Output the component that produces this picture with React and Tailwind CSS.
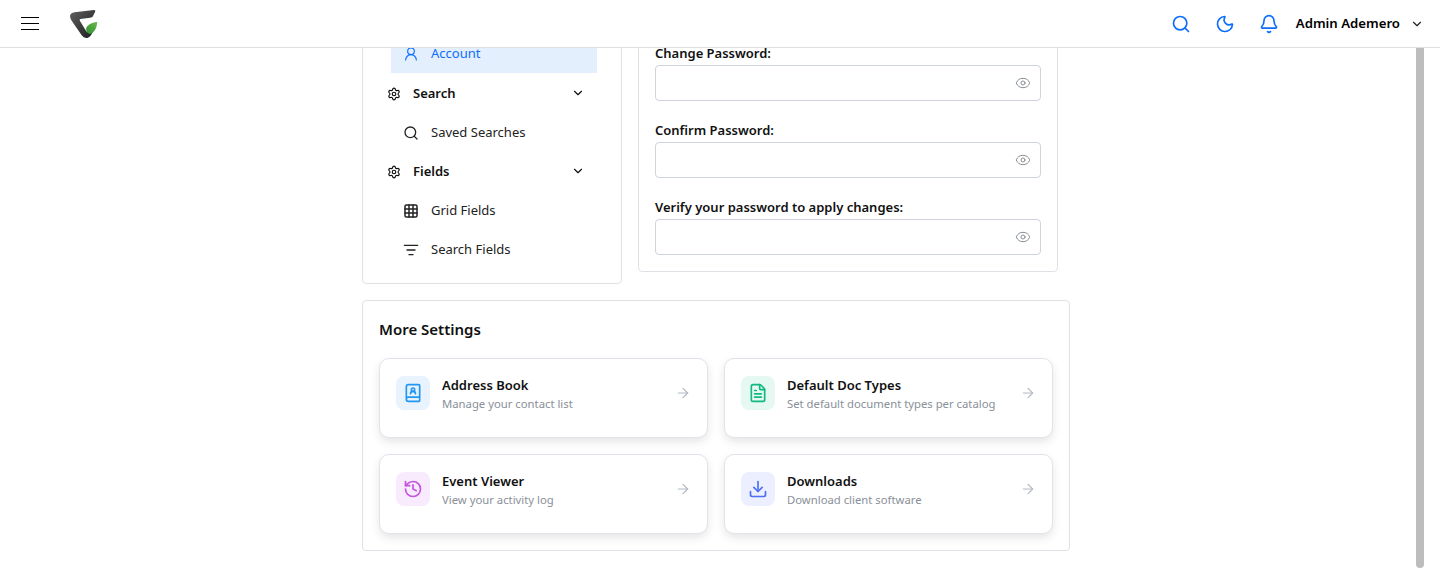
import React from 'react';
import {
  Search, Moon, Bell, ChevronDown, UserRound, Settings, Grid3x3, ListFilter, Eye,
  BookUser, FileText, History, Download, ArrowRight,
} from 'lucide-react';

const Logo = () => (
  <svg width="28" height="30" viewBox="0 0 28 30" className="block blur-[0.4px]">
    <defs>
      <linearGradient id="logoDark" x1="0" y1="0" x2="1" y2="1">
        <stop offset="0" stopColor="#606060" />
        <stop offset="1" stopColor="#1c1c1c" />
      </linearGradient>
      <linearGradient id="logoLeaf" x1="1" y1="0" x2="0" y2="1">
        <stop offset="0" stopColor="#6cb84a" />
        <stop offset="1" stopColor="#2f8f35" />
      </linearGradient>
    </defs>
    <path d="M0 7 C0 5 2 3.5 4.5 3.2 L24 1 C25.5 1 25.5 2 25 3 L23 7 C22.5 8 21.5 8.5 20 8.7 L10.5 10 C9.5 10.2 9.5 11 10 12 L15.5 21 C16.5 23 18 23.5 20 23 L23 22 C21.5 26.5 19 29 16.5 29 C14.5 29 13 28 11.5 26 L1.5 11.5 C0.5 10 0 8.5 0 7 Z" fill="url(#logoDark)" />
    <path d="M16 20 C17 16 21 13.5 27.2 13 C27 17.5 25.5 22 21.5 24.5 C19 25.8 16.5 24 16 20 Z" fill="url(#logoLeaf)" />
  </svg>
);

const Header = () => (
  <header className="h-12 shrink-0 bg-white border-b border-[#e0e0e0] flex items-center relative z-10">
    <button className="ml-[21px] w-[18px] flex flex-col gap-[5px]">
      <span className="block h-px bg-black" />
      <span className="block h-px bg-black" />
      <span className="block h-px bg-black" />
    </button>
    <div className="ml-[31px]">
      <Logo />
    </div>
    <div className="ml-auto flex items-center text-[#0d6efd]">
      <Search className="w-5 h-5" strokeWidth={2} />
      <Moon className="w-5 h-5 ml-6" strokeWidth={2} />
      <Bell className="w-5 h-5 ml-6" strokeWidth={2} />
      <span className="ml-[17px] text-[13.2px] font-semibold text-black">Admin Ademero</span>
      <ChevronDown className="w-[14px] h-[14px] ml-[10px] mr-4 text-[#222]" strokeWidth={2} />
    </div>
  </header>
);

const GroupRow = ({ label }) => (
  <div className="h-[39px] flex items-center pl-6 pr-9 text-[13px] font-semibold text-[#111]">
    <Settings className="w-[14px] h-[14px]" strokeWidth={2} />
    <span className="ml-3">{label}</span>
    <ChevronDown className="w-[14px] h-[14px] ml-auto -translate-y-px" strokeWidth={2} />
  </div>
);

const SubRow = ({ icon: Icon, label, strokeWidth = 2 }) => (
  <div className="h-[39px] flex items-center pl-10 text-[13px] text-[#222]">
    <Icon className="w-4 h-4 text-[#222]" strokeWidth={strokeWidth} />
    <span className="ml-3">{label}</span>
  </div>
);

const SideMenu = () => (
  <div className="w-[260px] shrink-0 bg-white border border-[#dee2e6] rounded pb-[14px] pt-[30px]">
    <div className="ml-7 mr-6 mb-px h-[38px] bg-[#e3effd] flex items-center pl-3 text-[13px] text-[#0d6efd]">
      <UserRound className="w-4 h-4" strokeWidth={1.75} />
      <span className="ml-3">Account</span>
    </div>
    <GroupRow label="Search" />
    <SubRow icon={Search} label="Saved Searches" />
    <GroupRow label="Fields" />
    <SubRow icon={Grid3x3} label="Grid Fields" strokeWidth={2.25} />
    <SubRow icon={ListFilter} label="Search Fields" />
  </div>
);

const PasswordField = ({ label }) => (
  <div>
    <label className="block text-[13px] leading-5 font-semibold text-[#111] mb-[2px]">{label}</label>
    <div className="h-9 border border-[#ced4da] rounded flex items-center justify-end pr-[9px]">
      <Eye className="w-4 h-4 text-[#8b9096]" strokeWidth={1.5} />
    </div>
  </div>
);

const PasswordCard = () => (
  <div className="w-[420px] shrink-0 bg-white border border-[#dee2e6] rounded px-4 pb-4 pt-[38px] flex flex-col gap-[19px]">
    <PasswordField label="Change Password:" />
    <PasswordField label="Confirm Password:" />
    <PasswordField label="Verify your password to apply changes:" />
  </div>
);

const settings = [
  { title: 'Address Book', text: 'Manage your contact list', icon: BookUser, box: 'bg-[#e8f3fd] text-[#2196f3]' },
  { title: 'Default Doc Types', text: 'Set default document types per catalog', icon: FileText, box: 'bg-[#e6f8f2] text-[#10b981]' },
  { title: 'Event Viewer', text: 'View your activity log', icon: History, box: 'bg-[#f8ebfd] text-[#c552e0]' },
  { title: 'Downloads', text: 'Download client software', icon: Download, box: 'bg-[#ebefff] text-[#4f6ef7]' },
];

const SettingCard = ({ title, text, icon: Icon, box }) => (
  <div className="h-20 bg-white border border-[#e2e3ea] rounded-[10px] shadow-[0_4px_10px_rgba(0,0,0,0.1)] flex items-start pl-4 pr-4 pt-[17px]">
    <div className={`w-[34px] h-[34px] rounded-lg flex items-center justify-center ${box}`}>
      <Icon className="w-5 h-5" strokeWidth={2} />
    </div>
    <div className="ml-3 -mt-[1px]">
      <div className="text-[13px] leading-5 font-semibold text-[#111]">{title}</div>
      <div className="text-[11.3px] leading-[18px] text-[#8a9099]">{text}</div>
    </div>
    <ArrowRight className="w-4 h-4 ml-auto mt-[9px] text-[#b4b9c2]" strokeWidth={1.75} />
  </div>
);

const MoreSettings = () => (
  <div className="mt-4 bg-white border border-[#dee2e6] rounded px-4 pt-[17px] pb-4">
    <h2 className="text-[15px] leading-[22px] font-semibold text-[#111]">More Settings</h2>
    <div className="mt-[18px] grid grid-cols-2 gap-4">
      {settings.map((item) => (
        <SettingCard key={item.title} {...item} />
      ))}
    </div>
  </div>
);

export default function App() {
  return (
    <div className="h-[576px] overflow-hidden bg-white flex flex-col font-['Noto_Sans',sans-serif]">
      <Header />
      <main className="relative flex-1 overflow-hidden">
        {/* page is scrolled, top of both cards sits behind the header */}
        <div className="w-[708px] ml-[362px] -mt-[44px]">
          <div className="flex items-start gap-4">
            <SideMenu />
            <PasswordCard />
          </div>
          <MoreSettings />
        </div>
        <div className="absolute left-[1416px] top-0 w-2 h-[520px] bg-[#bdbdbd] rounded-b" />
      </main>
    </div>
  );
}
